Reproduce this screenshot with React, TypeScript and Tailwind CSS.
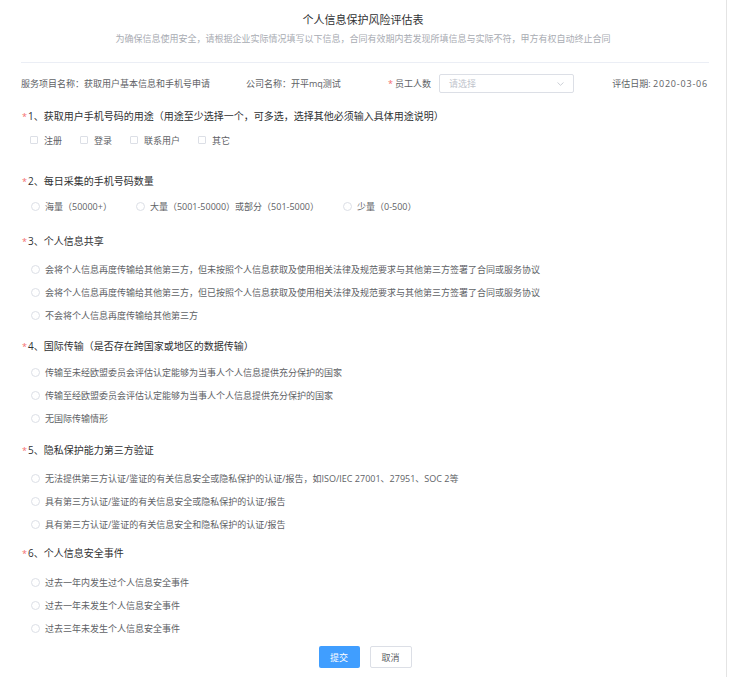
const font = { fontFamily: '"Open Sans", "Noto Sans CJK SC", sans-serif' };

type Q = {
  no: number;
  title: string;
  gap: string;
  optGap: string;
  options: string[];
};

const questions: Q[] = [
  {
    no: 3,
    title: "个人信息共享",
    gap: "mt-[15px]",
    optGap: "mt-[7px]",
    options: [
      "会将个人信息再度传输给其他第三方，但未按照个人信息获取及使用相关法律及规范要求与其他第三方签署了合同或服务协议",
      "会将个人信息再度传输给其他第三方，但已按照个人信息获取及使用相关法律及规范要求与其他第三方签署了合同或服务协议",
      "不会将个人信息再度传输给其他第三方",
    ],
  },
  {
    no: 4,
    title: "国际传输（是否存在跨国家或地区的数据传输）",
    gap: "mt-[9px]",
    optGap: "mt-[5px]",
    options: [
      "传输至未经欧盟委员会评估认定能够为当事人个人信息提供充分保护的国家",
      "传输至经欧盟委员会评估认定能够为当事人个人信息提供充分保护的国家",
      "无国际传输情形",
    ],
  },
  {
    no: 5,
    title: "隐私保护能力第三方验证",
    gap: "mt-[10px]",
    optGap: "mt-[7px]",
    options: [
      "无法提供第三方认证/鉴证的有关信息安全或隐私保护的认证/报告，如ISO/IEC 27001、27951、SOC 2等",
      "具有第三方认证/鉴证的有关信息安全或隐私保护的认证/报告",
      "具有第三方认证/鉴证的有关信息安全和隐私保护的认证/报告",
    ],
  },
  {
    no: 6,
    title: "个人信息安全事件",
    gap: "mt-[7px]",
    optGap: "mt-[8px]",
    options: [
      "过去一年内发生过个人信息安全事件",
      "过去一年未发生个人信息安全事件",
      "过去三年未发生个人信息安全事件",
    ],
  },
];

function Title({ no, text, className }: { no: number; text: string; className: string }) {
  return (
    <div className={`flex items-center h-[20px] pl-[22px] text-[10px] text-[#303133] ${className}`}>
      <span className="text-[#f56c6c] text-[9px] mr-[1px]">*</span>
      <span>{no}、{text}</span>
    </div>
  );
}

function Radio({ label }: { label: string }) {
  return (
    <div className="flex items-center">
      <span className="w-[9px] h-[9px] rounded-full border border-[#dcdfe6] bg-white" />
      <span className="ml-[5px] text-[9px] text-[#606266]">{label}</span>
    </div>
  );
}

function Checkbox({ label }: { label: string }) {
  return (
    <div className="flex items-center">
      <span className="w-[8px] h-[8px] rounded-[1px] border border-[#dcdfe6] bg-white" />
      <span className="ml-[6px] text-[9px] text-[#606266]">{label}</span>
    </div>
  );
}

export default function App() {
  return (
    <div className="w-[734px] h-[677px] bg-white overflow-hidden leading-none" style={font}>
      <div className="w-[727px] h-full border-r border-[#e4e4e4]">
        <div className="pt-[9px] h-[29px] flex items-center justify-center text-[11px] text-[#303133]">
          个人信息保护风险评估表
        </div>
        <div className="h-[18px] flex items-center justify-center text-[9px] text-[#a8abb2]">
          为确保信息使用安全，请根据企业实际情况填写以下信息，合同有效期内若发现所填信息与实际不符，甲方有权自动终止合同
        </div>
        <div className="mt-[15px] ml-[21px] mr-[17px] border-t border-[#ebeef5]" />

        <div className="mt-[11px] h-[19px] flex items-center pl-[21px] text-[9px] text-[#606266]">
          <div className="w-[225px]">服务项目名称：获取用户基本信息和手机号申请</div>
          <div className="w-[142px]">公司名称：开平mq测试</div>
          <span className="text-[#f56c6c] mr-[2px]">*</span>
          <span>员工人数</span>
          <div className="ml-[8px] w-[135px] h-[19px] border border-[#dcdfe6] rounded-[2px] flex items-center justify-between px-[9px] text-[#c0c4cc]">
            <span>请选择</span>
            <svg width="7" height="4" viewBox="0 0 7 4" fill="none" stroke="#c0c4cc" strokeWidth="0.8">
              <path d="M0.5 0.5 L3.5 3.3 L6.5 0.5" />
            </svg>
          </div>
          <div className="flex-1 text-right pr-[18px]">
            评估日期: <span className="tracking-[0.8px]">2020-03-06</span>
          </div>
        </div>

        <Title no={1} text="获取用户手机号码的用途（用途至少选择一个，可多选，选择其他必须输入具体用途说明）" className="mt-[13px]" />
        <div className="mt-[4px] h-[20px] flex items-center gap-[18px] pl-[30px]">
          {["注册", "登录", "联系用户", "其它"].map((c) => (
            <Checkbox key={c} label={c} />
          ))}
        </div>

        <Title no={2} text="每日采集的手机号码数量" className="mt-[21px]" />
        <div className="mt-[5px] h-[20px] flex items-center gap-[24px] pl-[31px]">
          {["海量（50000+）", "大量（5001-50000）或部分（501-5000）", "少量（0-500）"].map((c) => (
            <Radio key={c} label={c} />
          ))}
        </div>

        {questions.map((q) => (
          <div key={q.no}>
            <Title no={q.no} text={q.title} className={q.gap} />
            <div className={`${q.optGap} pl-[31px]`}>
              {q.options.map((o) => (
                <div key={o} className="h-[23px] flex items-center">
                  <Radio label={o} />
                </div>
              ))}
            </div>
          </div>
        ))}

        <div className="mt-[6px] flex justify-center gap-[10px] pl-[4px]">
          <button className="w-[41px] h-[22px] rounded-[2px] bg-[#409eff] text-white text-[9px]">提交</button>
          <button className="w-[42px] h-[22px] rounded-[2px] border border-[#dcdfe6] bg-white text-[#606266] text-[9px]">取消</button>
        </div>
      </div>
    </div>
  );
}
